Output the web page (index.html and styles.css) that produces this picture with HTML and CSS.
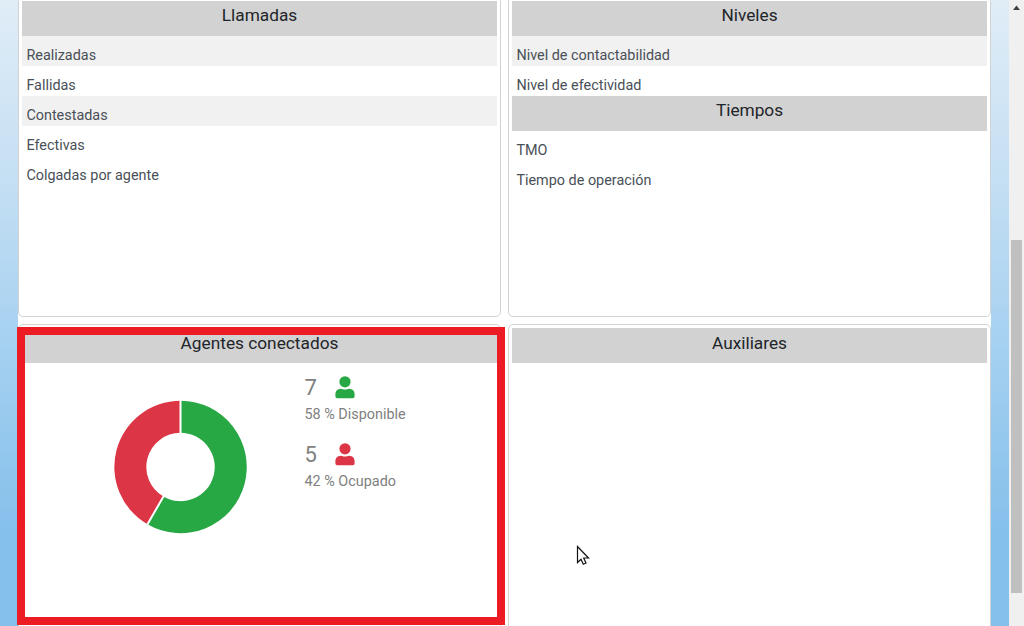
FILE: index.html
```
<!DOCTYPE html>
<html lang="es">
<head>
<meta charset="utf-8">
<title>Supervisión</title>
<link rel="stylesheet" href="styles.css">
</head>
<body>
<div class="page">
  <main class="board">
    <section class="card">
      <h2 class="title">Llamadas</h2>
      <ul class="list">
        <li class="row striped">Realizadas</li>
        <li class="row">Fallidas</li>
        <li class="row striped">Contestadas</li>
        <li class="row">Efectivas</li>
        <li class="row">Colgadas por agente</li>
      </ul>
    </section>
    <section class="card">
      <h2 class="title">Niveles</h2>
      <ul class="list">
        <li class="row striped">Nivel de contactabilidad</li>
        <li class="row">Nivel de efectividad</li>
      </ul>
      <h2 class="title">Tiempos</h2>
      <ul class="list">
        <li class="row">TMO</li>
        <li class="row">Tiempo de operación</li>
      </ul>
    </section>
    <section class="card">
      <h2 class="title lower">Agentes conectados</h2>
      <div class="agents">
        <svg class="donut" viewBox="-67.5 -67 134 134">
          <path fill="#28a745" d="M0-66.200A66.200 66.200 0 1 1-33.100 57.300L-17.100 29.600A34.200 34.200 0 1 0 0-34.200Z"/>
          <path fill="#dc3545" d="M-33.100 57.300A66.200 66.200 0 0 1 0-66.200V-34.200A34.200 34.200 0 0 0-17.100 29.600Z"/>
          <path stroke="#fff" stroke-width="2" d="M0-67V-33M-33.600 58.200L-16.600 28.800"/>
        </svg>
        <div class="stats">
          <div class="stat">
            <div class="count"><b>7</b><svg class="user free" viewBox="0 0 20 23"><circle cx="10" cy="5.800" r="5.600"/><path d="M6 12.700C7.300 12.700 8.200 13.500 10 13.500S12.700 12.700 14 12.700C18 12.700 19.600 15.500 19.600 18.300V20.500Q19.600 22.300 17.700 22.300H2.300Q.4 22.300 .4 20.500V18.300C.4 15.500 2 12.700 6 12.700Z"/></svg></div>
            <div class="label">58 % Disponible</div>
          </div>
          <div class="stat">
            <div class="count"><b>5</b><svg class="user busy" viewBox="0 0 20 23"><circle cx="10" cy="5.800" r="5.600"/><path d="M6 12.700C7.300 12.700 8.200 13.500 10 13.500S12.700 12.700 14 12.700C18 12.700 19.600 15.500 19.600 18.300V20.500Q19.600 22.300 17.700 22.300H2.300Q.4 22.300 .4 20.500V18.300C.4 15.500 2 12.700 6 12.700Z"/></svg></div>
            <div class="label">42 % Ocupado</div>
          </div>
        </div>
      </div>
    </section>
    <section class="card">
      <h2 class="title lower">Auxiliares</h2>
    </section>
  </main>
  <div class="scrollbar">
    <svg class="arrow" viewBox="0 0 15 12"><path d="M4 10L7.500 5.500L11 10Z"/></svg>
    <div class="thumb"></div>
  </div>
</div>
<div class="highlight"></div>
<svg class="pointer" viewBox="0 0 14 21"><path d="M1.500 1.500V17.500L5 14.200L7.300 19.300L10 18L7.700 13H12.500Z" fill="#fff" stroke="#111" stroke-width="1.200"/></svg>
</body>
</html>
```
FILE: styles.css
```
* { box-sizing: border-box; }
body {
  margin: 0;
  height: 626px;
  overflow: hidden;
  font-family: Roboto, "Liberation Sans", sans-serif;
  background: #fff;
}
.page {
  display: flex;
  height: 626px;
  padding-left: 18px;
  background: linear-gradient(#e0edf7 0, #c3def3 190px, #a8d2f1 330px, #85c0eb 530px, #85c0eb 100%);
}
.board {
  display: grid;
  grid-template-columns: 483px 483px;
  grid-template-rows: 320px 320px;
  gap: 7px;
  width: 973px;
  height: 629px;
  margin-top: -3px;
  margin-right: 18px;
  background: #fff;
}
.card {
  padding: 3px;
  background: #fff;
  border: 1px solid #d2d2d2;
  border-radius: 5px;
}
.title {
  margin: 0;
  height: 35px;
  background: #d2d2d2;
  color: #212529;
  font-size: 17.28px;
  font-weight: 400;
  line-height: 28px;
  text-align: center;
}
.lower { line-height: 30px; }
.list { margin: 0; padding: 0; list-style: none; }
.row {
  height: 30px;
  padding: 5px 4.4px 0;
  color: #495057;
  font-size: 14.4px;
  line-height: 30px;
}
.striped { background: #f1f1f1; }
.agents {
  display: flex;
  padding: 37px 0 0 91px;
}
.donut { width: 134px; height: 134px; }
.stats { margin: -27px 0 0 57.5px; color: #808080; }
.stat { height: 67px; }
.count { display: flex; height: 30px; }
.count b { width: 30px; font-size: 22px; font-weight: 400; line-height: 30px; }
.user { width: 20px; height: 23px; margin-top: 3px; }
.free { fill: #28a745; }
.busy { fill: #dc3545; }
.label { font-size: 14.4px; line-height: 24px; }
.scrollbar { width: 15px; background: #f0f0f0; }
.arrow { display: block; width: 15px; height: 12px; fill: #404040; }
.thumb { width: 11px; height: 353px; margin: 228px 0 0 2px; background: #c0c0c0; }
.highlight {
  position: absolute;
  left: 17px;
  top: 327px;
  width: 488px;
  height: 298px;
  border: 8px solid #ed1c24;
}
.pointer { position: absolute; left: 576px; top: 545px; width: 14px; height: 21px; }
```
